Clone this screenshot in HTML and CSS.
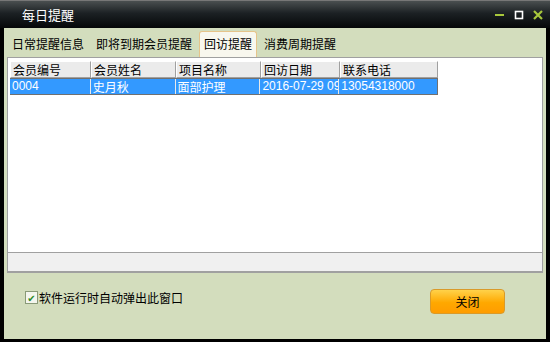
FILE: index.html
```html
<!DOCTYPE html>
<html lang="zh-CN">
<head>
    <meta charset="UTF-8">
    <title>每日提醒</title>
    <link rel="stylesheet" href="styles.css">
</head>
<body>
    <div class="win">
        <!-- 标题栏 -->
        <div class="titlebar">
            <span class="title">每日提醒</span>
            <div class="btns">
                <svg width="12" height="12" viewBox="0 0 12 12"><rect x="1" y="5" width="9" height="2" fill="#a8c83c"/></svg>
                <svg width="12" height="12" viewBox="0 0 12 12"><rect x="2.5" y="2.5" width="7" height="7" fill="none" stroke="#fff" stroke-width="1.6"/></svg>
                <svg width="12" height="12" viewBox="0 0 12 12"><path d="M2 2 L10 10 M10 2 L2 10" stroke="#a8c83c" stroke-width="2.2"/></svg>
            </div>
        </div>
        <div class="body">
            <!-- 选项卡 -->
            <ul class="tabs">
                <li>日常提醒信息</li>
                <li>即将到期会员提醒</li>
                <li class="active">回访提醒</li>
                <li>消费周期提醒</li>
            </ul>
            <div class="panel">
                <div class="grid">
                    <div class="row head">
                        <div class="c1">会员编号</div>
                        <div class="c2">会员姓名</div>
                        <div class="c3">项目名称</div>
                        <div class="c4">回访日期</div>
                        <div class="c5">联系电话</div>
                    </div>
                    <div class="row sel">
                        <div class="c1">0004</div>
                        <div class="c2">史月秋</div>
                        <div class="c3">面部护理</div>
                        <div class="c4">2016-07-29 09:00</div>
                        <div class="c5">13054318000</div>
                    </div>
                </div>
                <div class="foot"></div>
            </div>
            <div class="bottom">
                <label class="check"><span class="box">&#10004;</span>软件运行时自动弹出此窗口</label>
                <button class="close">关闭</button>
            </div>
        </div>
    </div>
</body>
</html>
```

FILE: styles.css
```css
*{
    margin: 0;
    padding: 0;
    box-sizing: border-box;
}
ul, li{
    list-style: none;
}
body{
    width: 550px;
    height: 342px;
    overflow: hidden;
    font-family: "Noto Sans CJK SC", "DejaVu Sans", sans-serif;
    font-size: 12px;
    color: #000;
}
.win{
    width: 550px;
    height: 342px;
    background: #000;
    display: flex;
    flex-direction: column;
}
.titlebar{
    height: 28px;
    display: flex;
    align-items: center;
    justify-content: space-between;
    padding: 0 6px 0 22px;
    background: linear-gradient(#4a4f50, #1c2124 45%, #050708);
    border-top: 1px solid #777;
}
.title{
    color: #fff;
    font-size: 13px;
}
.btns{
    display: flex;
    gap: 7px;
    align-items: center;
}
.body{
    flex: 1;
    margin: 0 4px 3px 4px;
    background: #d3ddbd;
    display: flex;
    flex-direction: column;
}
.tabs{
    display: flex;
    height: 29px;
    padding: 4px 0 0 3px;
    align-items: stretch;
}
.tabs li{
    padding: 4px 5px 0 5px;
    margin-right: 2px;
    line-height: 16px;
}
.tabs li.active{
    background: #f8f7ee;
    border: 1px solid #e6c48a;
    border-bottom: none;
    border-radius: 3px 3px 0 0;
    padding: 4px 4px 0 4px;
    margin: -1px 2px 0 0;
}
.panel{
    margin: 0 3px 0 3px;
    height: 216px;
    border: 1px solid #a0a0a0;
    background: #fff;
    padding: 3px 3px 1px 2px;
    display: flex;
    flex-direction: column;
}
.grid{
    flex: 1;
}
.row{
    display: flex;
    height: 17px;
    line-height: 16px;
}
.row div{
    padding-left: 2px;
    white-space: nowrap;
    overflow: hidden;
    border-right: 1px solid #a0a0a0;
}
.c1{ width: 81px; }
.c2{ width: 85px; }
.c3{ width: 85px; }
.c4{ width: 79px; }
.c5{ width: 98px; }
.head div{
    background: #ebebeb;
    border-top: 1px solid #fff;
    border-left: 1px solid #fff;
    border-bottom: 1px solid #a0a0a0;
}
.sel{
    color: #fff;
    background: #3399ff;
    width: 428px;
    border: 1px solid #707070;
    border-left: none;
    height: 17px;
    line-height: 15px;
}
.sel div{
    border-right: 1px solid #e8e8e8;
    font-family: "Liberation Sans", "Noto Sans CJK SC", sans-serif;
}
.sel .c2, .sel .c3{
    font-family: "Noto Sans CJK SC", sans-serif;
}
.sel .c5{
    border-right: none;
}
.foot{
    height: 20px;
    border: 1px solid #a0a0a0;
    border-left: none;
    border-right: none;
    background: #f0f0f0;
    margin: 0 -3px -1px -2px;
}
.bottom{
    flex: 1;
    display: flex;
    justify-content: space-between;
    align-items: center;
    padding: 0 41px 10px 21px;
}
.check{
    display: flex;
    align-items: center;
    gap: 1px;
    margin-top: -8px;
}
.box{
    width: 13px;
    height: 13px;
    border: 1px solid #8a9a78;
    background: #f4f6ee;
    color: #2a8a2a;
    font-size: 10px;
    line-height: 11px;
    text-align: center;
}
.close{
    width: 75px;
    height: 25px;
    border: 1px solid #d99a2a;
    border-radius: 4px;
    background: linear-gradient(#ffd24a, #ffa800 55%, #ff9c00);
    font-family: "Noto Sans CJK SC", sans-serif;
    font-size: 12px;
    color: #000;
}
```
